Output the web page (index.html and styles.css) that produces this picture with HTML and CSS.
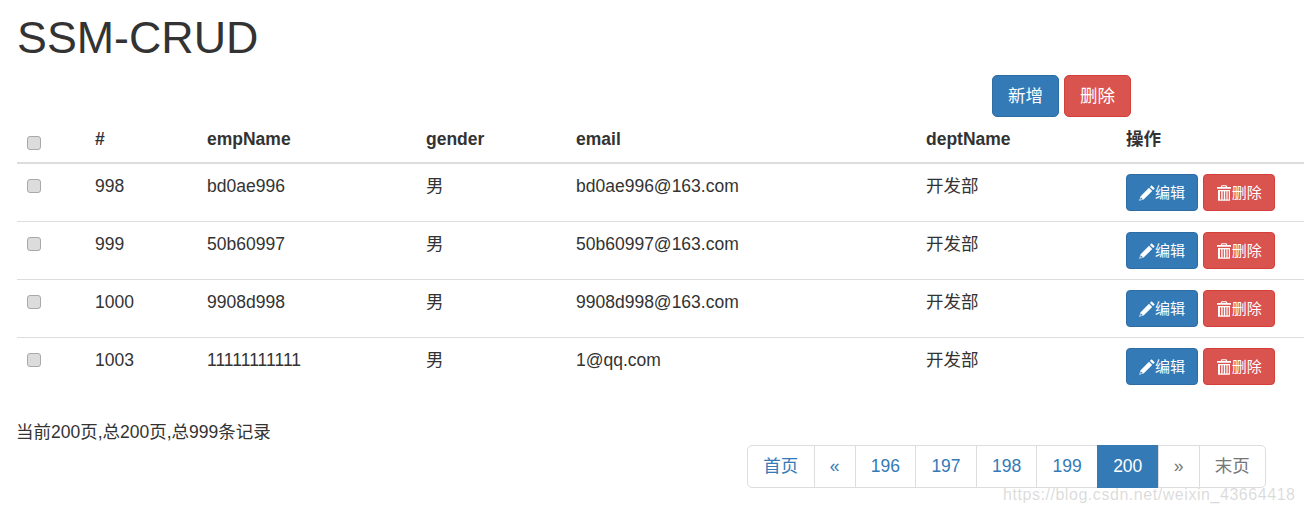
FILE: index.html
```html
<!DOCTYPE html>
<html lang="en">
<head>
  <meta charset="UTF-8">
  <meta name="viewport" content="width=device-width, initial-scale=1.0">
  <title>SSM-CRUD</title>
  <link rel="stylesheet" href="styles.css">
</head>
<body>
<div class="container">
  <h1>SSM-CRUD</h1>
  <div class="toolbar">
    <button class="btn btn-primary">新增</button>
    <button class="btn btn-danger">删除</button>
  </div>
  <table class="emps">
    <colgroup>
      <col class="c-check"><col class="c-id"><col class="c-name"><col class="c-gender">
      <col class="c-email"><col class="c-dept"><col class="c-ops">
    </colgroup>
    <thead>
      <tr>
        <th><input type="checkbox" class="check check-head"></th>
        <th>#</th><th>empName</th><th>gender</th><th>email</th><th>deptName</th><th>操作</th>
      </tr>
    </thead>
    <tbody>
      <tr>
        <td><input type="checkbox" class="check"></td>
        <td>998</td><td>bd0ae996</td><td>男</td><td>bd0ae996@163.com</td><td>开发部</td>
        <td class="ops">
          <button class="btn btn-sm btn-primary"><svg class="icon" viewBox="0 0 16 16"><path d="M12.6 0.2l3.2 3.2-1.7 1.7-3.2-3.2zM10 2.8l3.2 3.2-8.6 8.6-4.4 1.2 1.2-4.4zM1.7 12.2l-0.5 2.6 2.6-0.5z"/></svg>编辑</button>
          <button class="btn btn-sm btn-danger"><svg class="icon" viewBox="0 0 16 16"><path d="M5.5 0.3h5l0.8 1.7H15v1.8H1V2h3.7zM6.3 1.3L6 2h4l-0.3-0.7zM2 5h12v10.7H2zM4 6.2v8.3h1.2V6.2zM6.6 6.2v8.3h1.2V6.2zM9.2 6.2v8.3h1.2V6.2zM11.6 6.2v8.3h1.2V6.2z" fill-rule="evenodd"/></svg>删除</button>
        </td>
      </tr>
      <tr>
        <td><input type="checkbox" class="check"></td>
        <td>999</td><td>50b60997</td><td>男</td><td>50b60997@163.com</td><td>开发部</td>
        <td class="ops">
          <button class="btn btn-sm btn-primary"><svg class="icon" viewBox="0 0 16 16"><path d="M12.6 0.2l3.2 3.2-1.7 1.7-3.2-3.2zM10 2.8l3.2 3.2-8.6 8.6-4.4 1.2 1.2-4.4zM1.7 12.2l-0.5 2.6 2.6-0.5z"/></svg>编辑</button>
          <button class="btn btn-sm btn-danger"><svg class="icon" viewBox="0 0 16 16"><path d="M5.5 0.3h5l0.8 1.7H15v1.8H1V2h3.7zM6.3 1.3L6 2h4l-0.3-0.7zM2 5h12v10.7H2zM4 6.2v8.3h1.2V6.2zM6.6 6.2v8.3h1.2V6.2zM9.2 6.2v8.3h1.2V6.2zM11.6 6.2v8.3h1.2V6.2z" fill-rule="evenodd"/></svg>删除</button>
        </td>
      </tr>
      <tr>
        <td><input type="checkbox" class="check"></td>
        <td>1000</td><td>9908d998</td><td>男</td><td>9908d998@163.com</td><td>开发部</td>
        <td class="ops">
          <button class="btn btn-sm btn-primary"><svg class="icon" viewBox="0 0 16 16"><path d="M12.6 0.2l3.2 3.2-1.7 1.7-3.2-3.2zM10 2.8l3.2 3.2-8.6 8.6-4.4 1.2 1.2-4.4zM1.7 12.2l-0.5 2.6 2.6-0.5z"/></svg>编辑</button>
          <button class="btn btn-sm btn-danger"><svg class="icon" viewBox="0 0 16 16"><path d="M5.5 0.3h5l0.8 1.7H15v1.8H1V2h3.7zM6.3 1.3L6 2h4l-0.3-0.7zM2 5h12v10.7H2zM4 6.2v8.3h1.2V6.2zM6.6 6.2v8.3h1.2V6.2zM9.2 6.2v8.3h1.2V6.2zM11.6 6.2v8.3h1.2V6.2z" fill-rule="evenodd"/></svg>删除</button>
        </td>
      </tr>
      <tr>
        <td><input type="checkbox" class="check"></td>
        <td>1003</td><td>11111111111</td><td>男</td><td>1@qq.com</td><td>开发部</td>
        <td class="ops">
          <button class="btn btn-sm btn-primary"><svg class="icon" viewBox="0 0 16 16"><path d="M12.6 0.2l3.2 3.2-1.7 1.7-3.2-3.2zM10 2.8l3.2 3.2-8.6 8.6-4.4 1.2 1.2-4.4zM1.7 12.2l-0.5 2.6 2.6-0.5z"/></svg>编辑</button>
          <button class="btn btn-sm btn-danger"><svg class="icon" viewBox="0 0 16 16"><path d="M5.5 0.3h5l0.8 1.7H15v1.8H1V2h3.7zM6.3 1.3L6 2h4l-0.3-0.7zM2 5h12v10.7H2zM4 6.2v8.3h1.2V6.2zM6.6 6.2v8.3h1.2V6.2zM9.2 6.2v8.3h1.2V6.2zM11.6 6.2v8.3h1.2V6.2z" fill-rule="evenodd"/></svg>删除</button>
        </td>
      </tr>
    </tbody>
  </table>
  <div class="page-info">当前200页,总200页,总999条记录</div>
  <div class="page-nav">
    <ul class="pagination">
      <li><a href="#">首页</a></li>
      <li><a href="#">«</a></li>
      <li><a href="#">196</a></li>
      <li><a href="#">197</a></li>
      <li><a href="#">198</a></li>
      <li><a href="#">199</a></li>
      <li class="active"><a href="#">200</a></li>
      <li class="disabled"><a href="#">»</a></li>
      <li class="disabled"><a href="#">末页</a></li>
    </ul>
  </div>
</div>
<div class="watermark">https://blog.csdn.net/weixin_43664418</div>
</body>
</html>
```

FILE: styles.css
```css
html, body {
  height: 100%;
  overflow: hidden;
}
body {
  font-family: "Liberation Sans", "Noto Sans CJK SC", sans-serif;
  font-size: 17.5px;
  line-height: 25px;
  margin: 0;
  background: #fff;
  color: #333;
}
.container {
  padding-left: 17px;
}
h1 {
  margin: 13px 0 0;
  font-size: 44.8px;
  font-weight: 500;
  line-height: 49px;
}
.toolbar {
  display: flex;
  justify-content: flex-end;
  gap: 5px;
  margin-top: 13px;
  padding-right: 173px;
}
.btn {
  font-family: inherit;
  font-size: 17.5px;
  line-height: 25px;
  color: #fff;
  padding: 7.5px 15px;
  border: 1px solid transparent;
  border-radius: 5px;
  cursor: pointer;
}
.btn-primary {
  background: #337ab7;
  border-color: #2e6da4;
}
.btn-danger {
  background: #d9534f;
  border-color: #d43f3a;
}
.btn-sm {
  display: inline-flex;
  align-items: center;
  justify-content: center;
  width: 72px;
  height: 37px;
  padding: 0;
  font-size: 15px;
  line-height: 20px;
  border-radius: 4px;
}
.icon {
  width: 16px;
  height: 16px;
  fill: #fff;
}
.emps {
  table-layout: fixed;
  width: 1287px;
  border-collapse: collapse;
}
.c-check { width: 68px; }
.c-id { width: 112px; }
.c-name { width: 219px; }
.c-gender { width: 150px; }
.c-email { width: 350px; }
.c-dept { width: 200px; }
.c-ops { width: 188px; }
th, td {
  padding: 10px;
  text-align: left;
  vertical-align: top;
}
th {
  font-weight: bold;
  vertical-align: bottom;
  border-bottom: 2px solid #ddd;
}
tbody tr + tr td {
  border-top: 1px solid #ddd;
}
.ops {
  white-space: nowrap;
}
.check {
  appearance: none;
  display: block;
  width: 14px;
  height: 14px;
  margin: 5px 0 0;
  background: #dcdcdc;
  border: 1px solid #a9a9a9;
  border-radius: 3px;
}
.check-head {
  margin: 0 0 2px;
}
.page-info {
  margin-top: 25px;
  margin-left: -1px;
}
.page-nav {
  display: flex;
  justify-content: flex-end;
  padding-right: 38px;
}
.pagination {
  display: flex;
  margin: 0;
  padding: 0;
  list-style: none;
}
.pagination a {
  display: block;
  margin-left: -1px;
  padding: 8px 15.2px;
  color: #337ab7;
  text-decoration: none;
  background: #fff;
  border: 1px solid #ddd;
}
.pagination li:first-child a {
  margin-left: 0;
  border-radius: 5px 0 0 5px;
}
.pagination li:last-child a {
  border-radius: 0 5px 5px 0;
}
.pagination .active a {
  color: #fff;
  background: #337ab7;
  border-color: #337ab7;
}
.pagination .disabled a {
  color: #777;
}
.watermark {
  position: absolute;
  left: 1003px;
  top: 484px;
  font-size: 16px;
  line-height: 22px;
  letter-spacing: 0.55px;
  color: rgba(150, 150, 150, 0.35);
}
```
